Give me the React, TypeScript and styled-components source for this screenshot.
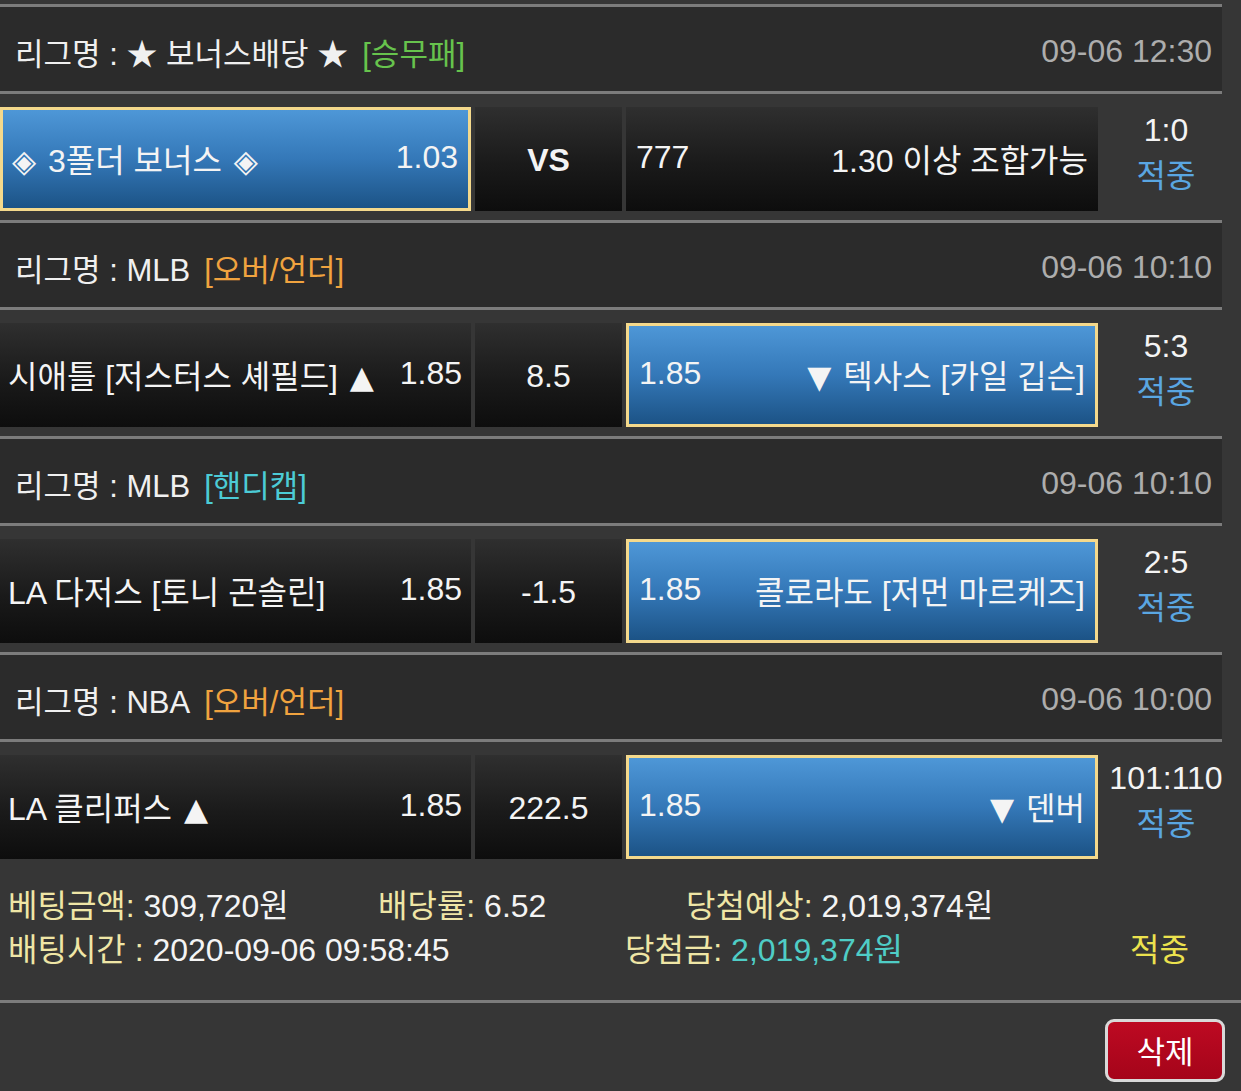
import React from "react";
import styled, { createGlobalStyle } from "styled-components";

const GlobalStyle = createGlobalStyle`
  html, body {
    margin: 0;
    padding: 0;
    background: #363636;
  }
  body {
    font-family: "Liberation Sans", "Noto Sans CJK KR", sans-serif;
    color: #f2f2f2;
  }
`;

type Pick = "home" | "away";

interface Game {
  league: string;
  tag: string;
  tagColor: string;
  date: string;
  home: string;
  homeOdds: string;
  mid: string;
  midBold?: boolean;
  awayOdds: string;
  away: string;
  pick: Pick;
  score: string;
}

const games: Game[] = [
  {
    league: "★ 보너스배당 ★",
    tag: "승무패",
    tagColor: "#67c34d",
    date: "09-06 12:30",
    home: "◈ 3폴더 보너스 ◈",
    homeOdds: "1.03",
    mid: "VS",
    midBold: true,
    awayOdds: "777",
    away: "1.30 이상 조합가능",
    pick: "home",
    score: "1:0",
  },
  {
    league: "MLB",
    tag: "오버/언더",
    tagColor: "#f0a33f",
    date: "09-06 10:10",
    home: "시애틀 [저스터스 셰필드] ▲",
    homeOdds: "1.85",
    mid: "8.5",
    awayOdds: "1.85",
    away: "▼ 텍사스 [카일 깁슨]",
    pick: "away",
    score: "5:3",
  },
  {
    league: "MLB",
    tag: "핸디캡",
    tagColor: "#4ccbd6",
    date: "09-06 10:10",
    home: "LA 다저스 [토니 곤솔린]",
    homeOdds: "1.85",
    mid: "-1.5",
    awayOdds: "1.85",
    away: "콜로라도 [저먼 마르케즈]",
    pick: "away",
    score: "2:5",
  },
  {
    league: "NBA",
    tag: "오버/언더",
    tagColor: "#f0a33f",
    date: "09-06 10:00",
    home: "LA 클리퍼스 ▲",
    homeOdds: "1.85",
    mid: "222.5",
    awayOdds: "1.85",
    away: "▼ 덴버",
    pick: "away",
    score: "101:110",
  },
];

// wrap the triangle / diamond marks so they get a symbol font
const withGlyphs = (text: string) =>
  text.split(/([▲▼◈])/).map((part, i) =>
    /[▲▼◈]/.test(part) ? <Glyph key={i}>{part}</Glyph> : part
  );

function App() {
  return (
    <Page>
      <GlobalStyle />
      {games.map((g, i) => (
        <div key={i}>
          <LeagueBar>
            <LeagueName>
              리그명 : {g.league}
              <Tag color={g.tagColor}>[{g.tag}]</Tag>
            </LeagueName>
            <DateText>{g.date}</DateText>
          </LeagueBar>
          <MatchRow>
            <TeamCell selected={g.pick === "home"}>
              <span>{withGlyphs(g.home)}</span>
              <span>{g.homeOdds}</span>
            </TeamCell>
            <MidCell bold={g.midBold}>{g.mid}</MidCell>
            <TeamCell selected={g.pick === "away"} away>
              <span>{g.awayOdds}</span>
              <span>{withGlyphs(g.away)}</span>
            </TeamCell>
            <ScoreCol>
              <span>{g.score}</span>
              <Result>적중</Result>
            </ScoreCol>
          </MatchRow>
        </div>
      ))}
      <Summary>
        <SummaryRow cols="370px 308px 1fr">
          <span>
            <Label>베팅금액: </Label>309,720원
          </span>
          <span>
            <Label>배당률: </Label>6.52
          </span>
          <span>
            <Label>당첨예상: </Label>2,019,374원
          </span>
        </SummaryRow>
        <SummaryRow cols="617px 505px 1fr">
          <span>
            <Label>배팅시간 : </Label>2020-09-06 09:58:45
          </span>
          <span>
            <Label>당첨금: </Label>
            <WinAmount>2,019,374원</WinAmount>
          </span>
          <HitText>적중</HitText>
        </SummaryRow>
      </Summary>
      <Footer>
        <DeleteButton>삭제</DeleteButton>
      </Footer>
    </Page>
  );
}

export default App;

const Page = styled.div`
  width: 1241px;
  height: 1091px;
  padding-top: 4px;
  box-sizing: border-box;
  overflow: hidden;
  background: #363636;
`;

const LeagueBar = styled.div`
  width: 1222px;
  height: 90px;
  box-sizing: border-box;
  border-top: 3px solid #7c7c7c;
  border-bottom: 3px solid #7c7c7c;
  background: #2b2b2b;
  display: flex;
  align-items: center;
  justify-content: space-between;
  padding: 4px 10px 0 15px;
  font-size: 31px;
`;

const LeagueName = styled.div`
  color: #f0f0f0;
  white-space: nowrap;
`;

const Tag = styled.span<{ color: string }>`
  color: ${(p) => p.color};
  margin-left: 14px;
`;

const DateText = styled.div`
  color: #adadad;
  font-size: 32px;
`;

const Glyph = styled.span`
  font-family: "DejaVu Sans", sans-serif;
  font-size: 0.98em;
  margin: 0 3px;
`;

const MatchRow = styled.div`
  height: 126px;
  box-sizing: border-box;
  padding: 13px 0 9px;
  display: flex;
  gap: 4px;
  font-size: 32px;
`;

const TeamCell = styled.div<{ selected?: boolean; away?: boolean }>`
  flex: 0 0 ${(p) => (p.away ? "472px" : "471px")};
  box-sizing: border-box;
  display: flex;
  align-items: center;
  justify-content: space-between;
  white-space: nowrap;
  color: #f4f4f4;
  padding: ${(p) => (p.away ? "0 10px 3px 10px" : "0 9px 3px 8px")};
  background: ${(p) =>
    p.selected
      ? "linear-gradient(to bottom, #4e97d7 0%, #3478b8 50%, #1c5386 100%)"
      : "linear-gradient(to bottom, #2f2f2f 0%, #1a1a1a 55%, #0d0d0d 100%)"};
  border: ${(p) => (p.selected ? "3px solid #f4d98c" : "none")};
  ${(p) => p.selected && `padding-left: ${p.away ? "10px" : "6px"};`}
  ${(p) => p.selected && !p.away && `padding-right: 10px;`}
`;

const MidCell = styled.div<{ bold?: boolean }>`
  flex: 0 0 147px;
  display: flex;
  align-items: center;
  justify-content: center;
  padding-top: 2px;
  box-sizing: border-box;
  font-weight: ${(p) => (p.bold ? 700 : 400)};
  color: #f4f4f4;
  background: linear-gradient(to bottom, #2f2f2f 0%, #1a1a1a 55%, #0d0d0d 100%);
`;

const ScoreCol = styled.div`
  flex: 0 0 128px;
  display: flex;
  flex-direction: column;
  align-items: center;
  justify-content: center;
  line-height: 46px;
  color: #f4f4f4;
  white-space: nowrap;
  padding-bottom: 13px;
`;

const Result = styled.span`
  color: #5aa6e2;
`;

const Summary = styled.div`
  padding: 16px 0 28px 8px;
  font-size: 32px;
  color: #f4f4f4;
  line-height: 44px;
  border-bottom: 3px solid #7c7c7c;
`;

const SummaryRow = styled.div<{ cols: string }>`
  display: grid;
  grid-template-columns: ${(p) => p.cols};
  white-space: nowrap;
`;

const Label = styled.span`
  color: #efe6a6;
`;

const WinAmount = styled.span`
  color: #4fcdc6;
`;

const HitText = styled.span`
  color: #ece24e;
`;

const Footer = styled.div`
  display: flex;
  justify-content: flex-end;
  padding: 16px 16px 0 0;
`;

const DeleteButton = styled.button`
  width: 120px;
  height: 63px;
  box-sizing: border-box;
  border: 3px solid #d9d9d9;
  border-radius: 9px;
  background: linear-gradient(to bottom, #bd0a22, #a5041a);
  color: #ffffff;
  font-family: "Liberation Sans", "Noto Sans CJK KR", sans-serif;
  font-size: 31px;
  padding: 0 0 2px;
  cursor: pointer;
`;
